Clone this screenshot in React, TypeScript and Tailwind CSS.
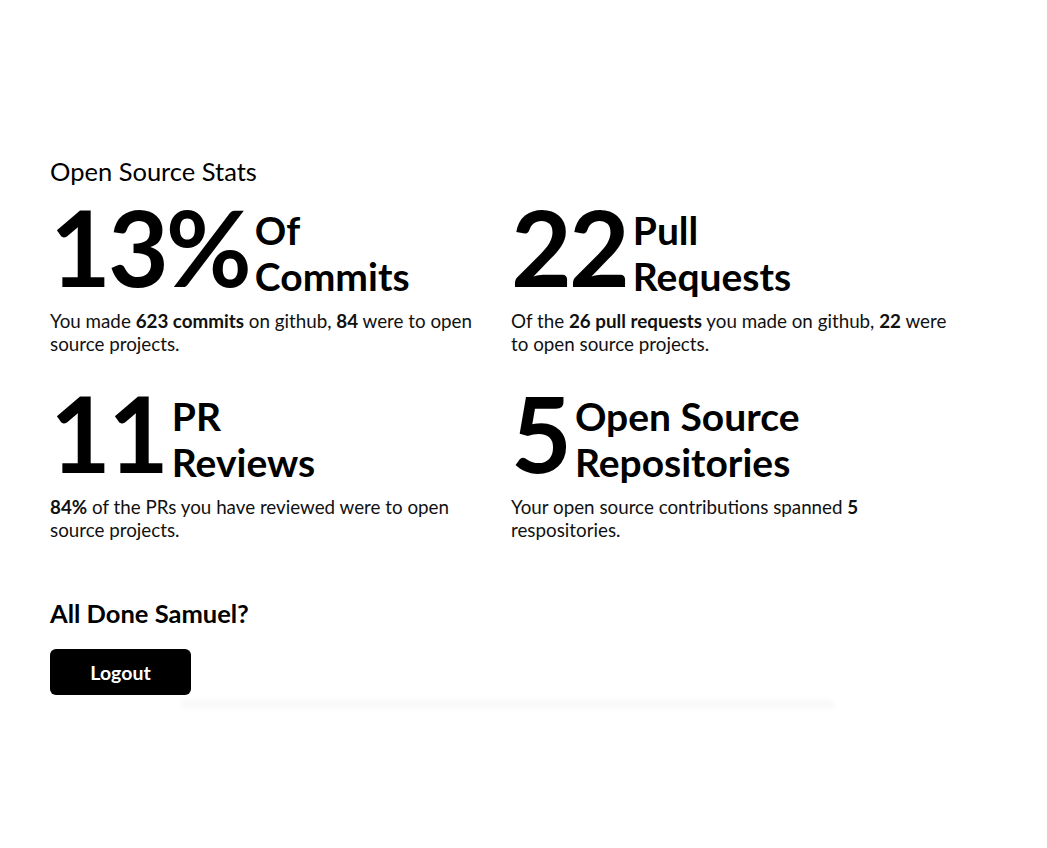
const stats = [
  {
    value: "13%",
    label: ["Of", "Commits"],
    text: (
      <>
        You made <b>623 commits</b> on github, <b>84</b> were to open source projects.
      </>
    ),
  },
  {
    value: "22",
    label: ["Pull", "Requests"],
    text: (
      <>
        Of the <b>26 pull requests</b> you made on github, <b>22</b> were to open source projects.
      </>
    ),
  },
  {
    value: "11",
    label: ["PR", "Reviews"],
    text: (
      <>
        <b>84%</b> of the PRs you have reviewed were to open source projects.
      </>
    ),
  },
  {
    value: "5",
    label: ["Open Source", "Repositories"],
    text: (
      <>
        Your open source contributions spanned <b>5</b> respositories.
      </>
    ),
  },
];

export default function App() {
  return (
    <main className="min-h-screen w-full bg-white font-['Lato','Liberation_Sans',sans-serif] text-black">
      <div className="px-[50px] pt-[156px]">
        <h1 className="text-[25.5px] leading-[1.2] font-normal">Open Source Stats</h1>
        <div className="mt-[7px] grid grid-cols-[445px_445px] gap-x-4 gap-y-[25px]">
          {stats.map((s) => (
            <section key={s.value}>
              <div className="flex items-end gap-[6px]">
                <span className="text-[105px] font-bold leading-none tracking-[-3px]">{s.value}</span>
                <span className="text-[39px] font-bold leading-[46px]">
                  {s.label[0]}
                  <br />
                  {s.label[1]}
                </span>
              </div>
              <p className="mt-[10px] text-[18.8px] leading-[23px] text-[#111]">{s.text}</p>
            </section>
          ))}
        </div>
        <h2 className="mt-[57px] text-[25.5px] font-bold leading-[1.2]">All Done Samuel?</h2>
        <button className="mt-[21px] flex h-[46px] w-[141px] items-center justify-center rounded-md bg-black text-[19.5px] font-bold text-white">
          Logout
        </button>
        <div className="ml-[130px] mt-[5px] h-[12px] w-[655px] rounded-full bg-gradient-to-b from-[#f6f6f6] to-white blur-[2px]" />
      </div>
    </main>
  );
}
